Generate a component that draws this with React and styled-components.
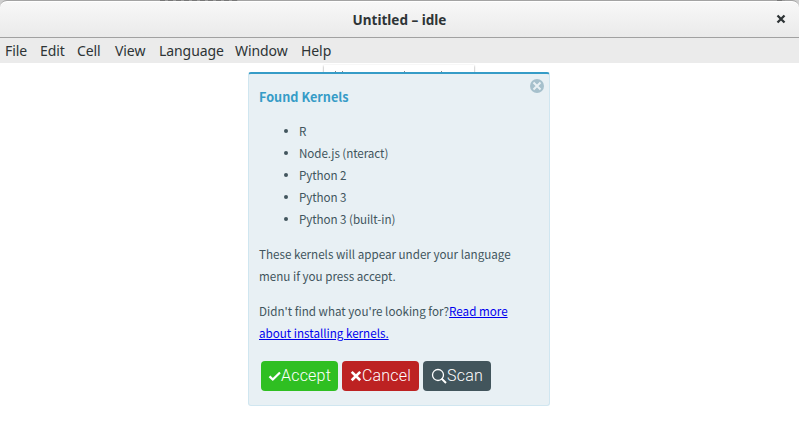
import React from "react";
import styled, { createGlobalStyle } from "styled-components";

const Global = createGlobalStyle`
  * { box-sizing: border-box; }
  body { margin: 0; overflow: hidden; background: #fff; }
`;

const Window = styled.div`
  width: 799px;
  height: 448px;
  overflow: hidden;
  background: #fff;
  display: flex;
  flex-direction: column;
`;

const Backdrop = styled.div`
  position: relative;
  height: 38px;
  flex: none;
  background: #cfcfcf;
`;

const BackdropShade = styled.div`
  position: absolute;
  top: 0;
  left: ${(p) => p.$left};
  width: ${(p) => p.$width};
  height: 1px;
  background: repeating-linear-gradient(90deg, #777 0 5px, #999 5px 8px);
`;

const TitleBar = styled.header`
  height: 38px;
  display: grid;
  grid-template-columns: 36px 1fr 36px;
  align-items: center;
  border-top: 1px solid #a3a3a3;
  border-bottom: 1px solid #a1a1a1;
  border-radius: 7px 7px 0 0;
  background: linear-gradient(#f8f8f8, #eaeaea);
  box-shadow: inset 0 1px #fff;
`;

const Title = styled.h1`
  grid-column: 2;
  margin: 2px 0 0;
  text-align: center;
  font: 700 13.5px/20px "Noto Sans", sans-serif;
  letter-spacing: 0;
  color: #2e3436;
`;

const WindowClose = styled.button`
  border: 0;
  padding: 0;
  margin: 0 0 0 12px;
  width: 12px;
  height: 12px;
  background: none;
  display: flex;
`;

const MenuBar = styled.nav`
  height: 25px;
  flex: none;
  display: grid;
  grid-template-columns: 35px 37px 38px 44px 76px 66px 40px;
  padding-left: 5px;
  background: #ebebeb;
`;

const MenuItem = styled.span`
  font: 400 14px/26px "Noto Sans", sans-serif;
  letter-spacing: -0.08px;
  color: #2e3436;
  white-space: nowrap;
`;

const Workspace = styled.main`
  flex: 1;
  position: relative;
`;

const CellToolbar = styled.div`
  position: absolute;
  left: 324px;
  top: 2px;
  width: 150px;
  height: 30px;
  background: #fff;
  box-shadow: 0 1px 2px #888;
`;

const ToolbarTick = styled.i`
  position: absolute;
  left: ${(p) => p.$left};
  top: 6px;
  width: 1px;
  height: 2px;
  background: #888;
`;

const Notification = styled.section`
  position: absolute;
  left: 248px;
  top: 9px;
  width: 302px;
  height: 334px;
  padding: 12px 10px 0;
  border: 1px solid #d0e6f0;
  border-top: 2px solid #369cc7;
  border-radius: 3px;
  background: #e8f0f4;
  color: #41555d;
  font: 400 11.64px/22px "Noto Sans CJK SC", sans-serif;
`;

const Heading = styled.h4`
  margin: 0 0 12px;
  font-size: 12.7px;
  line-height: 22px;
  font-weight: 700;
  color: #369cc7;
`;

const KernelList = styled.ul`
  margin: 0 0 13px;
  padding-left: 40px;
  list-style: none;
  letter-spacing: -0.07px;
`;

const Kernel = styled.li`
  display: flex;
  align-items: center;
  &::before {
    content: "";
    width: 4px;
    height: 4px;
    margin: 0 11px 0 -15px;
    border-radius: 50%;
    background: #41555d;
  }
`;

const Paragraph = styled.p`
  margin: 0 0 13px;
  white-space: nowrap;
`;

const Link = styled.a`
  color: #0000ee;
  text-decoration: underline;
`;

const Actions = styled.div`
  display: flex;
  gap: 4px;
  margin: 17px 0 0 2px;
`;

const ActionButton = styled.button`
  width: ${(p) => p.$width};
  height: 30px;
  padding: 0 0 0 7px;
  display: flex;
  align-items: center;
  border: 0;
  border-radius: 4px;
  background: ${(p) => p.$color};
  color: #fff;
  font: 300 16px/30px Roboto, sans-serif;
  letter-spacing: 0.2px;
  svg { flex: none; }
`;

const Dismiss = styled.button`
  position: absolute;
  right: 5px;
  top: 5px;
  width: 14px;
  height: 14px;
  padding: 0;
  border: 0;
  border-radius: 50%;
  background: #a6c0cc;
  display: flex;
`;

const menus = ["File", "Edit", "Cell", "View", "Language", "Window", "Help"];
const kernels = ["R", "Node.js (nteract)", "Python 2", "Python 3", "Python 3 (built-in)"];
const ticks = ["11px", "18px", "80px", "117px"];

export default function App() {
  return (
    <>
      <Global />
      <Window>
        <Backdrop>
          <TitleBar>
            <Title>Untitled – idle</Title>
            <WindowClose aria-label="Close window">
              <svg width="12" height="12" viewBox="0 0 12 12">
                <path d="M2.5 2.5 9.5 9.5M9.5 2.5 2.5 9.5" stroke="#2e3436" strokeWidth="2.3" />
              </svg>
            </WindowClose>
          </TitleBar>
          <BackdropShade $left="160px" $width="78px" />
          <BackdropShade $left="777px" $width="8px" />
        </Backdrop>
        <MenuBar>
          {menus.map((m) => <MenuItem key={m}>{m}</MenuItem>)}
        </MenuBar>
        <Workspace>
          <CellToolbar>
            {ticks.map((t) => <ToolbarTick key={t} $left={t} />)}
          </CellToolbar>
          <Notification>
            <Heading>Found Kernels</Heading>
            <KernelList>
              {kernels.map((k) => <Kernel key={k}>{k}</Kernel>)}
            </KernelList>
            <Paragraph>These kernels will appear under your language<br />menu if you press accept.</Paragraph>
            <Paragraph>
              Didn't find what you're looking for?<Link href="#">Read more<br />about installing kernels.</Link>
            </Paragraph>
            <Actions>
              <ActionButton $color="#2fbf22" $width="77px">
                <svg width="13" height="14" viewBox="0 0 13 14">
                  <path d="M1.5 7.3 4.8 10.5 12 3.5" fill="none" stroke="#fff" strokeWidth="2.3" />
                </svg>
                Accept
              </ActionButton>
              <ActionButton $color="#bd2222" $width="77px">
                <svg width="13" height="14" viewBox="0 0 13 14">
                  <path d="M2.7 2.9 11.2 11.2M11.2 2.9 2.7 11.2" stroke="#fff" strokeWidth="2.7" />
                </svg>
                Cancel
              </ActionButton>
              <ActionButton $color="#42555c" $width="68px">
                <svg width="17" height="16" viewBox="0 0 17 16">
                  <circle cx="8" cy="7" r="5.5" fill="none" stroke="#fff" strokeWidth="1.3" />
                  <path d="M11.5 10.5 16 15" stroke="#fff" strokeWidth="2" />
                </svg>
                Scan
              </ActionButton>
            </Actions>
            <Dismiss aria-label="Dismiss">
              <svg width="14" height="14" viewBox="0 0 14 14">
                <path d="M3.5 3.5 10.5 10.5M10.5 3.5 3.5 10.5" stroke="#e8f0f4" strokeWidth="2" />
              </svg>
            </Dismiss>
          </Notification>
        </Workspace>
      </Window>
    </>
  );
}
